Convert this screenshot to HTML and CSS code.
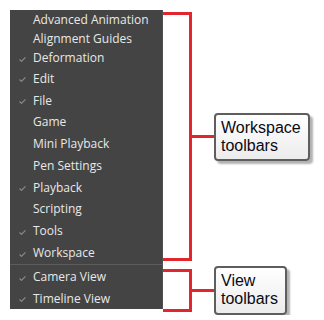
FILE: index.html
```html
<!DOCTYPE html>
<html lang="en">
<head>
    <meta charset="UTF-8" />
    <meta name="viewport" content="width=device-width, initial-scale=1.0" />
    <title>Toolbars Menu</title>
    <link rel="stylesheet" href="styles.css">
</head>
<body>
    <div class="page">
        <div class="menu">
            <div class="item short"><span class="check"></span>Advanced Animation</div>
            <div class="item mid"><span class="check"></span>Alignment Guides</div>
            <div class="item mid"><span class="check"><svg viewBox="0 0 8 6"><polyline points="0.5,3 2.8,5.2 7.5,0.5" /></svg></span>Deformation</div>
            <div class="item"><span class="check"><svg viewBox="0 0 8 6"><polyline points="0.5,3 2.8,5.2 7.5,0.5" /></svg></span>Edit</div>
            <div class="item"><span class="check"><svg viewBox="0 0 8 6"><polyline points="0.5,3 2.8,5.2 7.5,0.5" /></svg></span>File</div>
            <div class="item"><span class="check"></span>Game</div>
            <div class="item"><span class="check"></span>Mini Playback</div>
            <div class="item"><span class="check"></span>Pen Settings</div>
            <div class="item"><span class="check"><svg viewBox="0 0 8 6"><polyline points="0.5,3 2.8,5.2 7.5,0.5" /></svg></span>Playback</div>
            <div class="item"><span class="check"></span>Scripting</div>
            <div class="item"><span class="check"><svg viewBox="0 0 8 6"><polyline points="0.5,3 2.8,5.2 7.5,0.5" /></svg></span>Tools</div>
            <div class="item"><span class="check"><svg viewBox="0 0 8 6"><polyline points="0.5,3 2.8,5.2 7.5,0.5" /></svg></span>Workspace</div>
            <div class="separator"></div>
            <div class="item view"><span class="check"><svg viewBox="0 0 8 6"><polyline points="0.5,3 2.8,5.2 7.5,0.5" /></svg></span>Camera View</div>
            <div class="item view"><span class="check"><svg viewBox="0 0 8 6"><polyline points="0.5,3 2.8,5.2 7.5,0.5" /></svg></span>Timeline View</div>
        </div>

        <div class="notes">
            <div class="group workspace">
                <div class="bracket"></div>
                <div class="link"></div>
                <div class="label">Workspace<br>toolbars</div>
            </div>
            <div class="group view">
                <div class="bracket"></div>
                <div class="link"></div>
                <div class="label">View<br>toolbars</div>
            </div>
        </div>
    </div>
</body>
</html>
```

FILE: styles.css
```css
body {
    margin: 0;
    background: #fff;
}

.page {
    display: flex;
    align-items: flex-start;
}

.menu {
    margin: 10px 0 0 10px;
    width: 153px;
    height: 299px;
    box-sizing: border-box;
    padding-bottom: 1px;
    background: #444;
    border-right: 1px solid #505050;
    font-family: "Open Sans", sans-serif;
    font-size: 12px;
    color: #e8e8e8;
    display: flex;
    flex-direction: column;
}

.menu .item {
    display: flex;
    align-items: center;
    box-sizing: border-box;
    height: 21.78px;
    padding-top: 3px;
    white-space: nowrap;
}

.menu .item.short {
    height: 18px;
    padding-top: 0;
}

.menu .item.mid {
    height: 19px;
    padding-top: 2px;
}

.menu .item.view {
    height: 21.5px;
    padding-top: 2px;
}

.check {
    width: 23px;
    display: flex;
    justify-content: center;
    padding-top: 3px;
    padding-left: 2px;
    box-sizing: border-box;
}

.check svg {
    width: 7px;
    height: 5px;
    fill: none;
    stroke: #8c8c8c;
    stroke-width: 1.4;
}

.separator {
    height: 1px;
    margin-top: 2px;
    background: #5c5c5c;
}

.notes {
    margin-top: 12px;
    display: flex;
    flex-direction: column;
    gap: 5px;
}

.group {
    display: flex;
    align-items: center;
}

.bracket {
    width: 29px;
    box-sizing: border-box;
    border: 3px solid #e2262d;
    border-left: none;
}

.workspace .bracket {
    height: 249px;
}

.view .bracket {
    height: 43px;
}

.link {
    width: 22px;
    height: 3px;
    background: #e2262d;
}

.label {
    flex-shrink: 0;
    padding: 4px 7px 4px 5px;
    border: 2px solid #5e5e5e;
    border-radius: 4px;
    background: linear-gradient(#ffffff, #ececec);
    box-shadow: 3px 3px 2px rgba(0, 0, 0, 0.3);
    font-family: "Liberation Sans", Arial, sans-serif;
    font-size: 16px;
    line-height: 18px;
    color: #0a0a14;
}

.view .label {
    box-sizing: border-box;
    height: 49px;
}
```
